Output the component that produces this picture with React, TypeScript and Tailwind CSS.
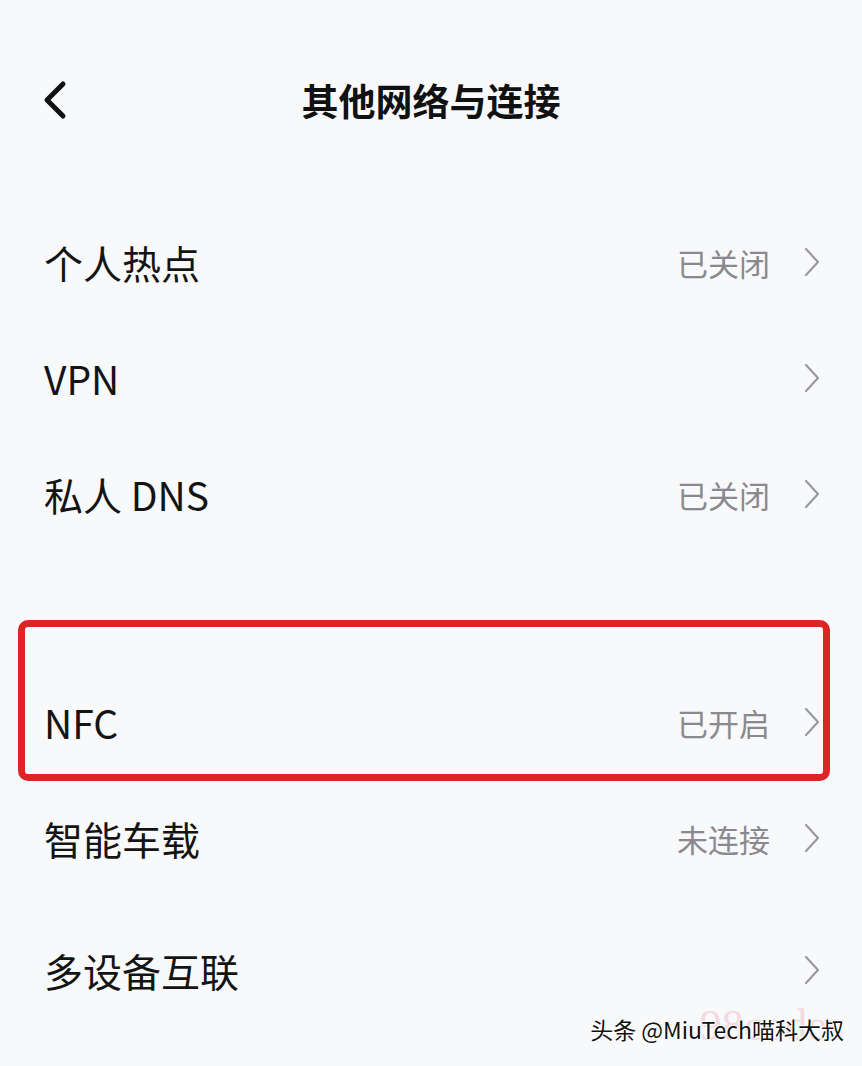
const cjk = "font-['Noto_Sans_CJK_SC','Noto_Sans',sans-serif]"

const Chevron = () => (
    <svg width="20" height="30" viewBox="0 0 20 30" className="shrink-0">
        <path d="M4 2 L16 15 L4 28" fill="none" stroke="#9a9a9e" strokeWidth="2.2" strokeLinecap="round" strokeLinejoin="round" />
    </svg>
)

const Row = ({ label, value, className = "" }: { label: string; value?: string; className?: string }) => (
    <div className={`flex h-[116px] items-center pl-[44px] pr-[40px] ${className}`}>
        <span className="flex-1 text-[39px] leading-none text-[#141414]">{label}</span>
        {value && <span className="mr-[32px] text-[31px] leading-none text-[#8a8a8e]">{value}</span>}
        <Chevron />
    </div>
)

export default function App() {
    return (
        <div className={`relative h-[1066px] w-[862px] overflow-hidden bg-[#f8f9fb] ${cjk}`}>
            <div className="relative flex h-[204px] items-start justify-center pt-[78px]">
                <svg width="30" height="40" viewBox="0 0 30 40" className="absolute left-[40px] top-[80px]">
                    <path d="M23 4 L7 20 L23 36" fill="none" stroke="#111" strokeWidth="5" strokeLinecap="round" strokeLinejoin="round" />
                </svg>
                <h1 className="text-[37px] font-bold leading-[44px] text-[#111]">其他网络与连接</h1>
            </div>

            <Row label="个人热点" value="已关闭" />
            <Row label="VPN" />
            <Row label="私人 DNS" value="已关闭" />

            <div className="relative pt-[112px]">
                <Row label="NFC" value="已开启" />
                <div className="absolute left-[18px] top-[68px] h-[161px] w-[812px] rounded-[10px] border-[7px] border-[#dc2626]" />
            </div>
            <Row label="智能车载" value="未连接" />
            <Row label="多设备互联" className="mt-[16px]" />

            <div className="absolute bottom-[22px] right-[18px]">
                <span className="pointer-events-none absolute right-0 top-[-14px] font-['Liberation_Serif',serif] text-[44px] leading-none text-[#f3c6cf] opacity-60">98codes</span>
                <span className="relative text-[23px] leading-none text-[#111] [text-shadow:0_0_2px_#fff,0_0_2px_#fff,1px_1px_0_#fff,-1px_-1px_0_#fff]">头条 @MiuTech喵科大叔</span>
            </div>
        </div>
    )
}
